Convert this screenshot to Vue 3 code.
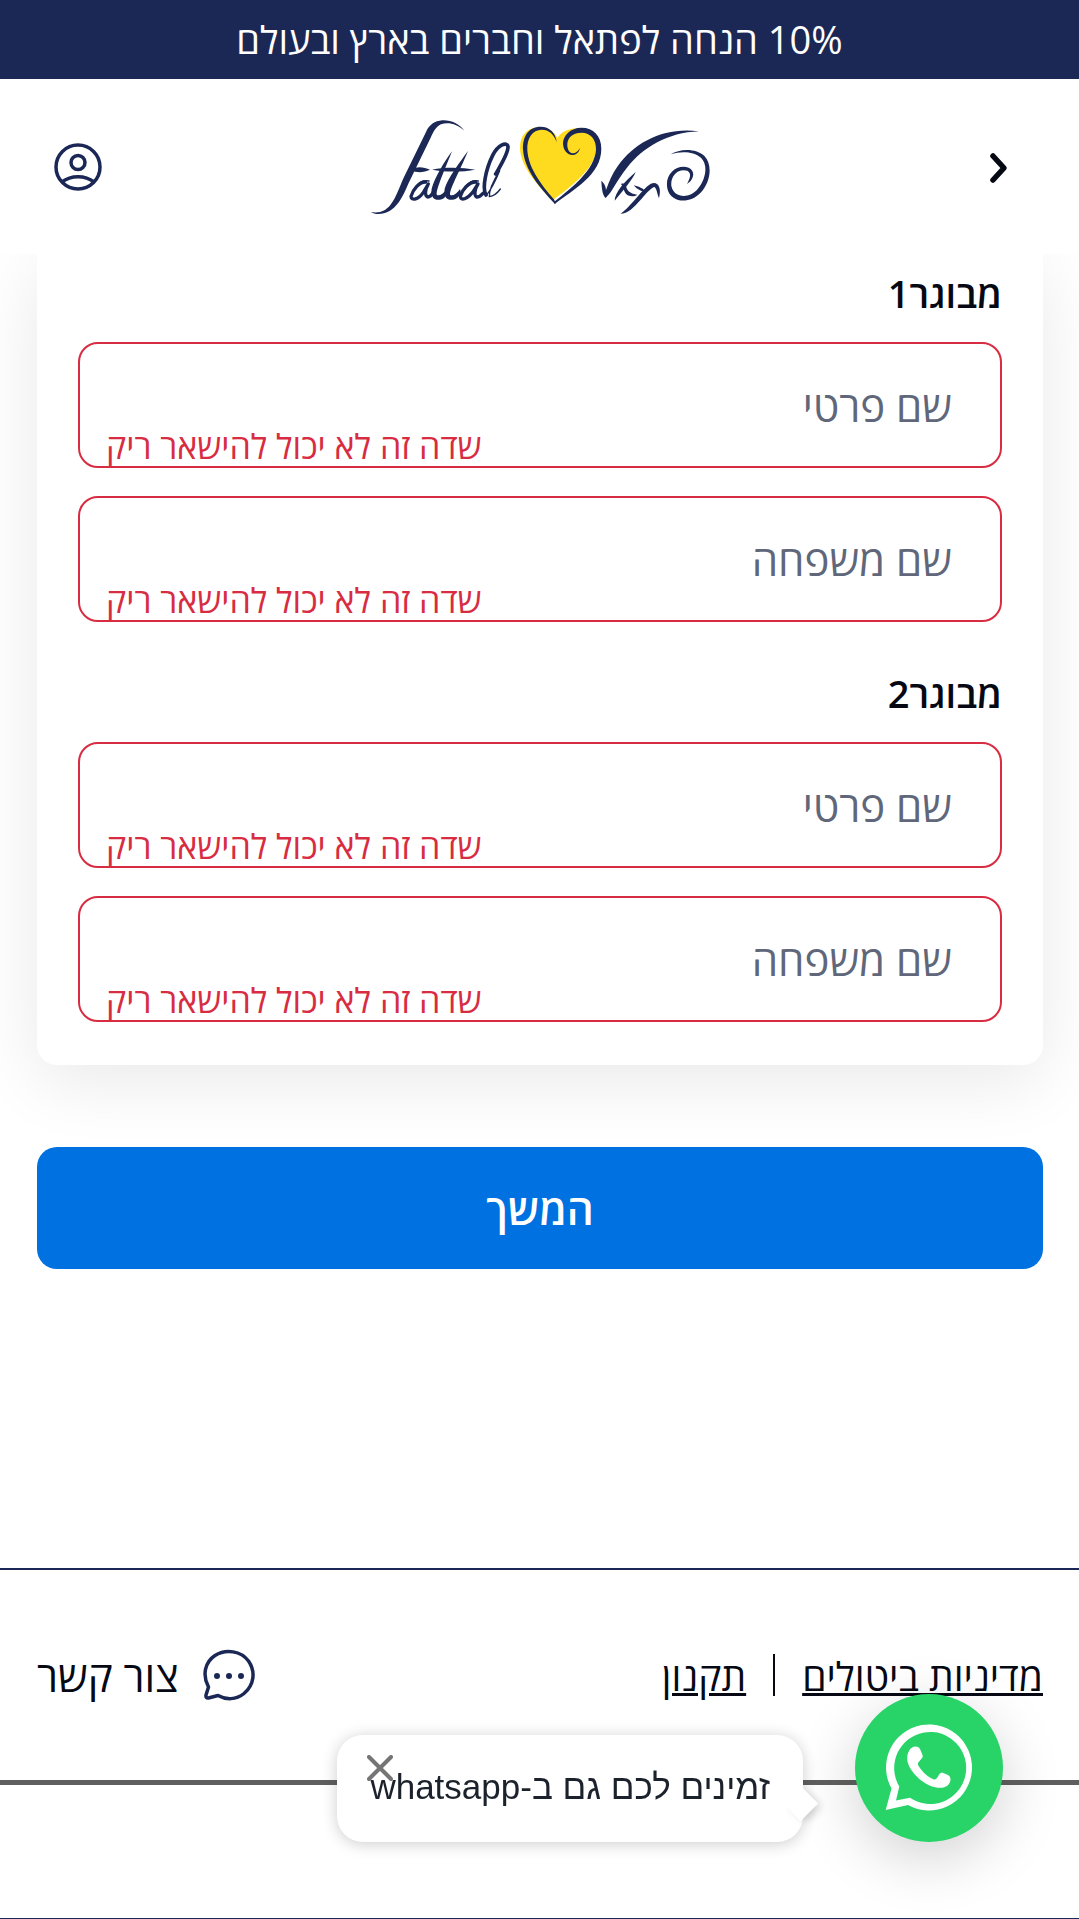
<script setup>
import { reactive, ref } from 'vue'

const error = 'שדה זה לא יכול להישאר ריק'
const guests = reactive([
  { id: 1, title: 'מבוגר1', first: '', last: '' },
  { id: 2, title: 'מבוגר2', first: '', last: '' },
])
const fields = [
  { key: 'first', label: 'שם פרטי' },
  { key: 'last', label: 'שם משפחה' },
]
const bubbleOpen = ref(true)
</script>

<template>
  <div class="page" dir="rtl">
    <div class="banner">10% הנחה לפתאל וחברים בארץ ובעולם</div>

    <header class="header">
      <button class="icon-button" type="button" aria-label="חזרה">
        <svg width="48" height="48" viewBox="0 0 48 48" fill="none" stroke="#060914" stroke-width="5.500" stroke-linecap="round" stroke-linejoin="round">
          <path d="M16 13 L27 25 L16 37" />
        </svg>
      </button>

      <a class="logo" href="#" aria-label="Fattal">
        <svg width="342" height="98" viewBox="27 51 1026 294" fill="#1b2856">
          <path fill="#ffdb20" d="M578 300C555 275 481 205 480 142C479 100 505 76 545 78C573 82 588 100 592 112C602 90 640 76 668 84C703 93 714 122 706 160C694 212 628 260 578 300Z" />
          <path d="M590 124C588 95 568 77 542 77C506 77 488 105 489 145C492 205 540 262 585 309L589 303C552 262 505 205 502 148C500 110 518 87 545 86C567 86 582 100 590 124Z" />
          <path fill="#fff" d="M710 135C710 205 640 252 583 294L585 304C650 262 714 205 714 135Z" />
          <path d="M584 309C640 265 724 222 724 143C724 104 700 80 665 80C630 80 608 105 609 130C611 151 625 164 640 162C650 161 658 152 660 141C652 153 645 158 638 157C627 155 621 143 622 128C624 108 640 95 665 95C692 95 708 115 708 145C705 207 636 260 582 303Z" />

          <path d="M313 89C292 69 264 62 243 70C228 77 220 93 213 108L146 246C130 283 112 326 72 337C55 341 42 339 32 333C60 338 77 329 91 312C109 289 118 258 131 230L198 93C208 71 224 60 247 58C274 57 298 68 313 89Z" />
          <path d="M153 206C169 195 191 197 210 206C191 215 169 217 153 206Z" />
          <path d="M216 206C255 197 309 199 346 206C309 213 255 214 216 206Z" />
          <path d="M276 151C254 180 223 232 215 263C211 289 224 299 240 296C251 294 259 286 263 275L260 264C250 279 237 286 231 282C225 273 251 214 276 151Z" />
          <path d="M324 150C302 180 263 232 254 263C250 289 263 299 279 296C290 294 298 286 303 275L300 264C290 279 277 286 271 282C265 271 298 214 324 150Z" />
          <g fill="none" stroke="#1b2856" stroke-linecap="round" stroke-linejoin="round">
            <path stroke-width="10" d="M197 243C178 242 158 267 153 286C154 301 176 295 190 274L205 249C194 268 194 284 203 288C210 288 216 281 220 273" />
            <path stroke-width="10" d="M347 243C326 243 306 267 301 286C302 301 322 294 338 274L354 249C343 267 342 284 350 288C357 288 363 284 369 277" />
            <path stroke-width="4" d="M164 263C174 245 190 236 207 240M313 263C322 245 339 236 355 240" />
            <path stroke-width="11" d="M378 282C366 263 377 205 398 163C415 130 441 121 444 137C445 156 424 190 407 219" />
            <path stroke-width="4" d="M378 284C391 269 407 238 419 209C398 243 387 266 388 287C402 285 413 275 421 264" />
          </g>

          <path d="M724 239C730 245 737 252 738 267C748 240 757 218 773 196C826 120 917 77 1017 91C922 95 850 139 802 199C769 240 758 272 737 291C728 284 725 264 724 239Z" />
          <path d="M764 299C764 276 791 244 827 213C817 238 788 269 764 299Z" />
          <path d="M783 249C791 245 797 249 801 264C807 276 820 279 832 281C820 290 803 286 796 276C790 267 791 258 783 249Z" />
          <path d="M782 338C806 323 838 277 862 256C876 243 891 242 897 257C902 268 899 282 897 292C891 278 891 265 884 258C866 261 837 309 812 326C801 334 792 338 782 338Z" />
          <path d="M821 253C835 256 850 262 860 275C847 273 832 266 821 253Z" />
          <path d="M932 160C959 142 1010 141 1034 166C1059 193 1051 246 1021 276C987 311 934 304 923 266C911 222 949 188 986 200C1009 211 1000 238 981 249C991 232 995 216 982 209C954 201 931 225 934 254C941 291 987 295 1013 264C1038 235 1045 191 1023 170C1000 150 961 150 932 160Z" />
        </svg>
      </a>

      <button class="icon-button" type="button" aria-label="אזור אישי">
        <svg width="48" height="48" viewBox="0 0 48 48" fill="none" stroke="#1b2856" stroke-width="3.500">
          <circle cx="24" cy="24" r="22" />
          <circle cx="24" cy="19.500" r="7" />
          <path d="M8 39C17 32 31 32 40 39" />
        </svg>
      </button>
    </header>

    <main class="main">
      <form @submit.prevent>
        <div class="card">
          <fieldset v-for="guest in guests" :key="guest.id" class="guest">
            <legend>{{ guest.title }}</legend>
            <div v-for="field in fields" :key="field.key" class="field">
              <input :id="field.key + guest.id" v-model="guest[field.key]" type="text" aria-invalid="true" />
              <label v-show="!guest[field.key]" :for="field.key + guest.id">{{ field.label }}</label>
              <span v-show="!guest[field.key]" class="error">{{ error }}</span>
            </div>
          </fieldset>
        </div>
        <button class="submit" type="submit">המשך</button>
      </form>
    </main>

    <footer class="footer">
      <div class="links">
        <nav class="legal">
          <a href="#">מדיניות ביטולים</a>
          <span class="divider"></span>
          <a href="#">תקנון</a>
        </nav>
        <a class="contact" href="#">
          <svg width="52" height="52" viewBox="0 0 52 52" fill="none" stroke="#1b2856" stroke-width="3.500" stroke-linejoin="round">
            <path d="M5.500 38C-1 26 2 13 12 6.500C23 -0.500 38 2 45.500 12C53 23 51 36 41 44.500C33 51 23 51 15 46.500L5.500 49Q2.500 49.500 3 46Z" />
            <g fill="#1b2856" stroke="none">
              <circle cx="14" cy="27" r="3" />
              <circle cx="26" cy="27" r="3" />
              <circle cx="38" cy="27" r="3" />
            </g>
          </svg>
          <span>צור קשר</span>
        </a>
      </div>
      <div class="lower"></div>
    </footer>

    <aside class="chat">
      <a class="whatsapp" href="#" aria-label="WhatsApp">
        <svg width="88" height="88" viewBox="0 0 88 88" fill="#fff">
          <path fill-rule="evenodd" d="M0.700 86L6.500 64.500A43 43 0 1 1 23 81ZM11 76.500L14.300 62.500A36 36 0 1 1 25 73.800Z" />
          <path d="M24 27C26 22 33 21 35 25L37.500 31C39 35 32 37 33 41C37 48 43 53 49 55.500C53 56 53 49 57 48.500L63 51C67 53 66 59 62 62C55 66 45 63 37 57C28 50 18 38 24 27Z" />
        </svg>
      </a>
      <div v-if="bubbleOpen" class="bubble">
        <span>זמינים לכם גם ב-whatsapp</span>
        <button class="close" type="button" aria-label="סגירה" @click="bubbleOpen = false">
          <svg width="26" height="26" viewBox="0 0 26 26" stroke="#757575" stroke-width="4" stroke-linecap="round">
            <path d="M2 2L24 24M24 2L2 24" />
          </svg>
        </button>
      </div>
    </aside>
  </div>
</template>

<style>
body {
  margin: 0;
  background: #fff;
}
</style>

<style scoped>
.page {
  display: flex;
  flex-direction: column;
  min-height: 100vh;
  overflow-x: hidden;
  color: #060914;
  font-family: "Open Sans", "Noto Sans", sans-serif;
}
button,
input {
  font-family: inherit;
}
.banner {
  padding: 16px;
  background: #1b2856;
  color: #fff;
  font-size: 38px;
  line-height: 47px;
  text-align: center;
}
.header {
  position: relative;
  z-index: 1;
  display: flex;
  align-items: center;
  justify-content: space-between;
  height: 175px;
  padding: 0 54px;
  background: #fff;
}
.icon-button {
  padding: 0;
  border: 0;
  background: none;
}
svg {
  display: block;
}
.main {
  padding: 0 36px 299px 37px;
}
.card {
  padding: 14px 41px 43px;
  border-radius: 0 0 20px 20px;
  background: #fff;
  box-shadow: 0 16px 70px rgba(0, 0, 0, 0.09);
}
.guest {
  display: flex;
  flex-direction: column;
  gap: 28px;
  min-width: 0;
  margin: 0;
  padding: 0;
  border: 0;
}
.guest + .guest {
  margin-top: 46px;
}
legend {
  height: 74px;
  padding: 0;
  font-size: 38px;
  font-weight: 600;
  line-height: 50px;
}
.field {
  display: grid;
}
.field > * {
  grid-area: 1 / 1;
}
input {
  box-sizing: border-box;
  width: 100%;
  height: 126px;
  padding: 0 48px;
  border: 2px solid #d72c41;
  border-radius: 20px;
  background: #fff;
  font-size: 42px;
}
label {
  align-self: center;
  justify-self: start;
  padding: 0 50px;
  color: #60677a;
  font-size: 42px;
}
.error {
  align-self: end;
  justify-self: end;
  padding: 0 28px;
  color: #d72c41;
  font-size: 34px;
  line-height: 44px;
}
.submit {
  display: block;
  width: 100%;
  height: 122px;
  margin-top: 82px;
  padding: 0;
  border: 0;
  border-radius: 20px;
  background: #0071e1;
  color: #fff;
  font-size: 42px;
  font-weight: 600;
}
.links {
  display: flex;
  align-items: center;
  justify-content: space-between;
  height: 210px;
  padding: 0 36px 0 37px;
  border-top: 2px solid #1b2856;
  border-bottom: 5px solid #5f5f5f;
}
.legal,
.contact {
  display: flex;
  align-items: center;
}
.legal {
  gap: 27px;
  font-size: 39px;
}
a {
  color: inherit;
}
.divider {
  width: 2px;
  height: 42px;
  background: #060914;
}
.contact {
  gap: 24px;
  font-size: 42px;
  text-decoration: none;
}
.lower {
  height: 133px;
  border-bottom: 1px solid #1b2856;
}
.chat {
  position: fixed;
  right: 76px;
  bottom: 77px;
  z-index: 2;
  display: flex;
  align-items: flex-end;
  gap: 52px;
}
.whatsapp {
  display: grid;
  place-items: center;
  width: 148px;
  height: 148px;
  border-radius: 50%;
  background: #28d468;
  box-shadow: 0 16px 60px rgba(0, 0, 0, 0.18);
}
.bubble {
  position: relative;
  padding: 28px 33px 32px;
  border-radius: 26px;
  background: #fff;
  box-shadow: 0 2px 16px rgba(0, 0, 0, 0.2);
  color: #1c222c;
  font-family: "Liberation Sans", Arial, sans-serif;
  font-size: 35px;
  line-height: 47px;
}
.bubble::after {
  content: "";
  position: absolute;
  right: -10px;
  top: 56px;
  width: 25px;
  height: 25px;
  background: #fff;
  box-shadow: 6px -2px 10px -2px rgba(0, 0, 0, 0.2);
  transform: rotate(45deg);
}
.close {
  position: absolute;
  left: 30px;
  top: 20px;
  padding: 0;
  border: 0;
  background: none;
}
</style>
